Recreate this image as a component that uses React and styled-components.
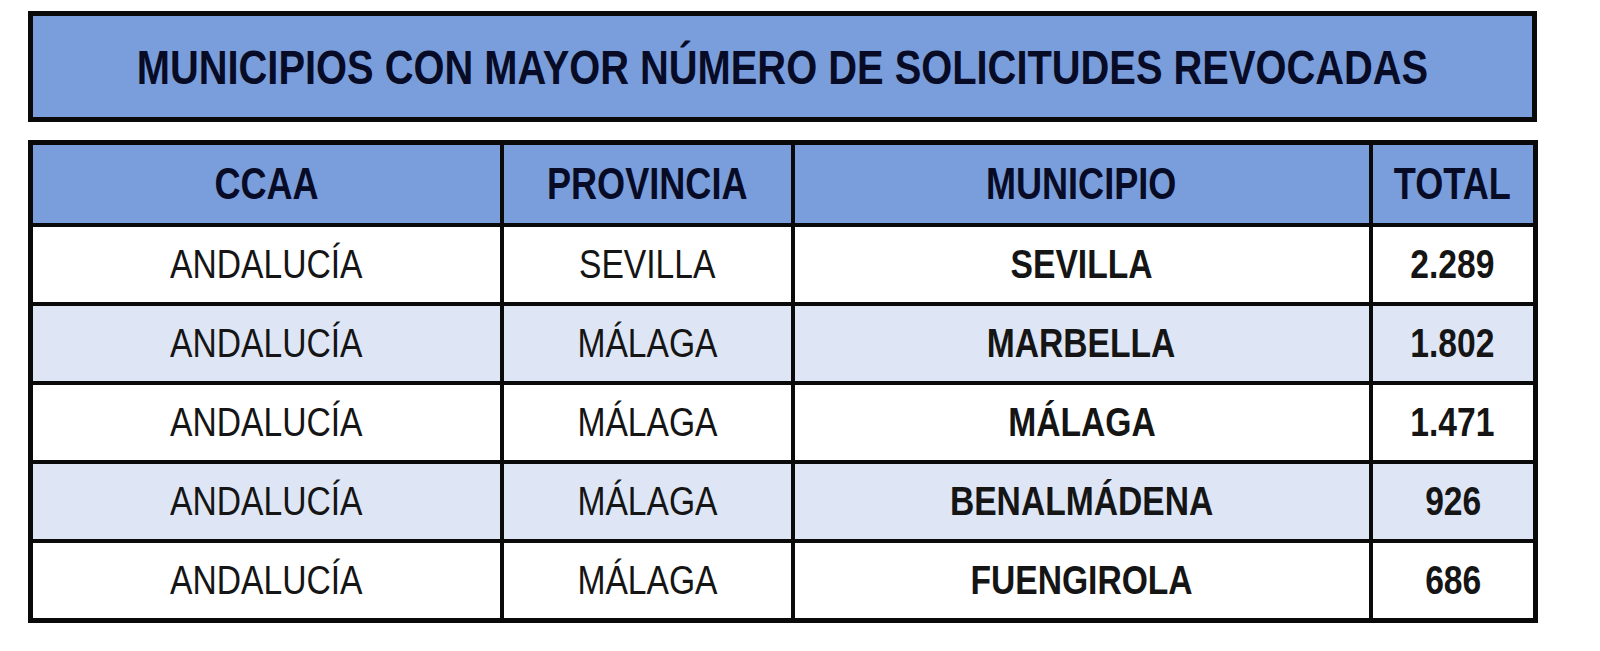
import React from 'react';
import styled, { createGlobalStyle } from 'styled-components';

const GlobalStyle = createGlobalStyle`
  body {
    margin: 0;
    background: #ffffff;
    font-family: "Liberation Sans", Arial, sans-serif;
  }
`;

const Page = styled.div`
  width: 1509px;
  padding: 11px 0 0 28px;
`;

const TitleBox = styled.div`
  height: 101px;
  border: 5px solid #0a0a0a;
  background: #7a9edb;
  display: flex;
  align-items: center;
  justify-content: center;
  overflow: hidden;
`;

const Title = styled.h1`
  margin: 0;
  flex: none;
  font-size: 48.6px;
  font-weight: bold;
  color: #070b26;
  white-space: nowrap;
`;

/* the source uses Arial Narrow; squeeze Liberation Sans to match */
const Narrow = styled.span`
  display: inline-block;
  white-space: nowrap;
  transform: scaleX(0.82);
  transform-origin: center;
`;

const Table = styled.table`
  margin-top: 18px;
  width: 1505px;
  border-collapse: collapse;
  table-layout: fixed;
  border: 5px solid #0a0a0a;
`;

const HeadCell = styled.th`
  height: 78px;
  padding: 0;
  border: 4px solid #0a0a0a;
  background: #7a9edb;
  color: #070b26;
  font-size: 44px;
  font-weight: bold;
  text-align: center;
`;

const Row = styled.tr`
  background: ${(p) => (p.$shaded ? '#dee6f5' : '#ffffff')};
`;

const Cell = styled.td`
  height: 75px;
  padding: 0;
  border: 4px solid #0a0a0a;
  color: #151515;
  font-size: 41px;
  font-weight: ${(p) => (p.$bold ? 'bold' : 'normal')};
  text-align: center;
`;

const columns = [
  { label: 'CCAA', width: 471 },
  { label: 'PROVINCIA', width: 291 },
  { label: 'MUNICIPIO', width: 578 },
  { label: 'TOTAL', width: 165 },
];

const rows = [
  { ccaa: 'ANDALUCÍA', provincia: 'SEVILLA', municipio: 'SEVILLA', total: '2.289' },
  { ccaa: 'ANDALUCÍA', provincia: 'MÁLAGA', municipio: 'MARBELLA', total: '1.802' },
  { ccaa: 'ANDALUCÍA', provincia: 'MÁLAGA', municipio: 'MÁLAGA', total: '1.471' },
  { ccaa: 'ANDALUCÍA', provincia: 'MÁLAGA', municipio: 'BENALMÁDENA', total: '926' },
  { ccaa: 'ANDALUCÍA', provincia: 'MÁLAGA', municipio: 'FUENGIROLA', total: '686' },
];

const App = () => {
  return (
    <Page>
      <GlobalStyle />
      <TitleBox>
        <Title>
          <Narrow>MUNICIPIOS CON MAYOR NÚMERO DE SOLICITUDES REVOCADAS</Narrow>
        </Title>
      </TitleBox>

      <Table>
        <colgroup>
          {columns.map((c) => (
            <col key={c.label} style={{ width: c.width }} />
          ))}
        </colgroup>
        <thead>
          <tr>
            {columns.map((c) => (
              <HeadCell key={c.label}>
                <Narrow>{c.label}</Narrow>
              </HeadCell>
            ))}
          </tr>
        </thead>
        <tbody>
          {rows.map((r, i) => (
            <Row key={r.municipio} $shaded={i % 2 === 1}>
              <Cell><Narrow>{r.ccaa}</Narrow></Cell>
              <Cell><Narrow>{r.provincia}</Narrow></Cell>
              <Cell $bold><Narrow>{r.municipio}</Narrow></Cell>
              <Cell $bold><Narrow>{r.total}</Narrow></Cell>
            </Row>
          ))}
        </tbody>
      </Table>
    </Page>
  );
};

export default App;
